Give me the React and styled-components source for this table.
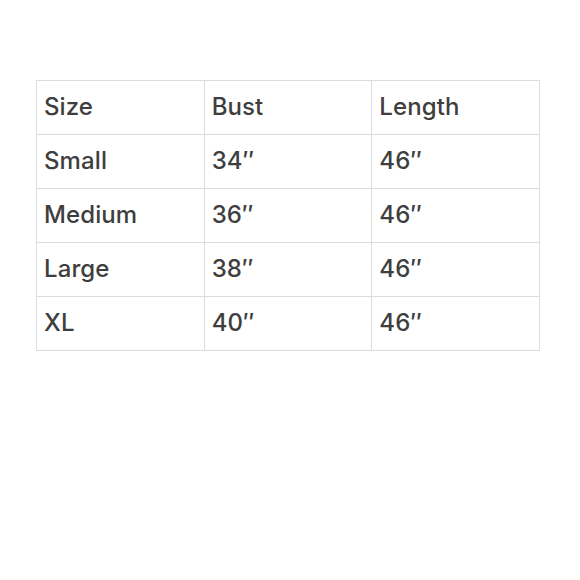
import React from "react";
import styled, { createGlobalStyle } from "styled-components";

const Global = createGlobalStyle`
  html, body { margin: 0; padding: 0; background: #fff; }
  body { font-family: Inter, "Noto Sans", sans-serif; }
`;

const Page = styled.div`
  width: 580px;
  height: 580px;
  padding: 80px 0 0 36px;
  box-sizing: border-box;
`;

const Table = styled.table`
  border-collapse: collapse;
  width: 504px;
  table-layout: fixed;
`;

const Cell = styled.td`
  border: 1px solid #dcdcdc;
  height: 54px;
  padding: 0 0 3px 7px;
  box-sizing: border-box;
  font-size: 24px;
  font-weight: 500;
  color: #3e3e3e;
  vertical-align: middle;
  letter-spacing: 0.1px;
`;

const rows = [
  ["Size", "Bust", "Length"],
  ["Small", "34″", "46″"],
  ["Medium", "36″", "46″"],
  ["Large", "38″", "46″"],
  ["XL", "40″", "46″"],
];

export default function App() {
  return (
    <Page>
      <Global />
      <Table>
        <tbody>
          {rows.map((r, i) => (
            <tr key={i}>
              {r.map((c, j) => (
                <Cell key={j}>{c}</Cell>
              ))}
            </tr>
          ))}
        </tbody>
      </Table>
    </Page>
  );
}
